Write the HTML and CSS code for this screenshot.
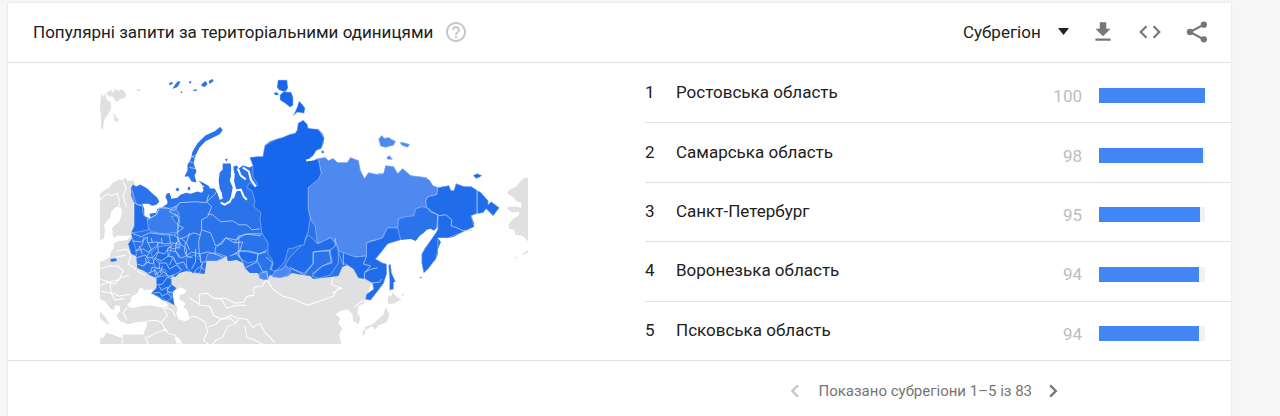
FILE: index.html
```html
<!DOCTYPE html>
<html lang="uk">
<head>
    <meta charset="UTF-8">
    <title>Популярні запити за територіальними одиницями</title>
    <link rel="stylesheet" href="styles.css">
</head>
<body>
<section class="widget">
    <header class="widget-header">
        <h2 class="widget-title">Популярні запити за територіальними одиницями</h2>
        <button class="icon-button help-button" type="button" aria-label="Довідка">
            <svg width="24" height="24" viewBox="0 0 24 24"><path d="M11 18h2v-2h-2v2zm1-16C6.480 2 2 6.480 2 12s4.480 10 10 10 10-4.480 10-10S17.520 2 12 2zm0 18c-4.410 0-8-3.590-8-8s3.590-8 8-8 8 3.590 8 8-3.590 8-8 8zm0-14c-2.210 0-4 1.790-4 4h2c0-1.100.9-2 2-2s2 .9 2 2c0 2-3 1.750-3 5h2c0-2.250 3-2.500 3-5 0-2.210-1.790-4-4-4z"/></svg>
        </button>
        <div class="widget-actions">
            <label class="resolution">
                <select class="resolution-select" aria-label="Рівень регіону">
                    <option>Субрегіон</option>
                </select>
                <svg class="resolution-arrow" width="11" height="7" viewBox="0 0 11 7"><path d="M0 0h11L5.500 7z"/></svg>
            </label>
            <button class="icon-button" type="button" aria-label="Завантажити">
                <svg width="26" height="26" viewBox="0 0 24 24"><path d="M19 9h-4V3H9v6H5l7 7 7-7zM5 18v2h14v-2H5z"/></svg>
            </button>
            <button class="icon-button" type="button" aria-label="Вставити">
                <svg width="26" height="26" viewBox="0 0 24 24"><path d="M9.400 16.600L4.800 12l4.600-4.600L8 6l-6 6 6 6 1.400-1.400zm5.200 0l4.600-4.600-4.600-4.600L16 6l6 6-6 6-1.400-1.400z"/></svg>
            </button>
            <button class="icon-button" type="button" aria-label="Поділитися">
                <svg width="26" height="26" viewBox="0 0 24 24"><path d="M5.500 12L18.300 5.200M5.500 12l12.800 6.800" fill="none" stroke="#757575" stroke-width="1.900"/><circle cx="18.300" cy="5.200" r="2.900"/><circle cx="5.500" cy="12" r="2.900"/><circle cx="18.300" cy="18.800" r="2.900"/></svg>
            </button>
        </div>
    </header>

    <div class="widget-body">
        <div class="map-panel">
            <svg class="map" viewBox="101 79 426 264" role="img" aria-label="Карта субрегіонів">
                <!-- neighbouring countries -->
                <g class="land">
                    <path d="M101 193L105 190L110 187L114 182L120 179L123 180L126 177L128 180L134 180L136 183L133 187L136 240L160 262L180 268L200 266L210 256L230 255L246 262L262 268L290 268L330 274L342 264L354 264L360 275L372 279L367 293L364 302L358 305L357 312L360 317L358 323L353 320L352 313L347 308L340 310L335 313L340 317L338 322L342 327L339 333L341 343H101z"/>
                    <path d="M102 94l3 3 1-4 2 7 4 2 0 7-3 5-4 6-1 9-2-1 0-12-1-8zM107 93l5-3 2 3 2-4 3 2 4-2 4 5-1 4-5 1-4 3-3-5-5-1zM113 112l3 3 2 3 2 1-2 3-3-2 0-4z"/>
                    <path d="M388 295l3 0 1-4 4 5 5 2-7 4-6 1-1-4zM385 306l4 7-3 8-8 3-3 4-4-3-6 4-1-3 8-3 7-6 4-4zM362 329l3 0-1 5-2 0z"/>
                    <path d="M527 177l-5 1-4 4-3 4-8 4-1 3 7 4 1 3 6 2 0 5-4-1-9 0-1 2 5 4 7-1-1 4-5 3-5 6 1 4 5 1 1 5 7 1 6 6z"/>
                    <path d="M522 252l5-3 0 2-5 3zM513 257l4-2-3 3zM400 294l4-2-2 3zM138 89h3v2h-3z"/>
                </g>
                <g class="water">
                    <path d="M117 206l5 1 1 5-3 9-7 6 1 10 4-2 5 0 9 0-4 4-8 1-5 2 0 5-3 3-1 6-7 4-4 1 0-8 1-13 4-3 1-8-1-5 6-7 1-6z"/>
                    <path d="M128 303l3-2 2-6 5-3 3-6 5 3 8-1-2 5 7 3 7 4 3 5-9 1-9-2-10 1-7 2-4-1z"/>
                    <path d="M173 293l3-4 5-3 6 3-1 3-6 2 0 4 6 4-2 4 4 3 2 9-4 2-7-2-2-6 1-5-4-7-2-4z"/>
                    <path d="M101 298l5 2 5 7 4 2 1-5 5 1 0 5-4 4 4 6 8 3 8-2 10-1 1 4-4 9-7 0-12 0-4 3-8-3-6-2-2 5-4 1v-20l5 4 5 3-4-7-6-7zM175 335l4 1 4 6h-6z"/>
                </g>
                <path class="land-border" d="M101 199l7-6 4 2 6-2 2 6 0 7M124 181l3 7-3 7 3 11M112 260l5-4 10-2M101 268l8-3 10 0 5 5-4 8-9 3-10-3M118 250l9-2 5 6-3 9 8 5M101 285l7-4 8 2 5-6 9-3M111 281l1 10 8 4 11-2M102 290l10 2 4 7 9-2M138 270l8 4M128 306l-4 6 4 6M163 305l5 9-6 7 4 7-8 3-10 5M147 320l9-1 6 2M164 325l5 7 8 2M165 306l8 3 3 6M188 317l7-2 10 5 3 10-4 9 5 4M208 326l8-3 6-6 8 1M190 297l10 6 0-10 8-1 6 5 8 1 5 9 10-3 9 0M200 304l10 1 4 9 8 4 7-3 7 7 3-5 8 1 6 8 7-4 5 9 10 10M236 322l-8 3-5 11-7 3-3 4M245 324l2 12 9 3 9 5M223 318l8-4 7 3M214 297l12 0 9 5 9-1 3-6 7-1 0-8 8-1 4-6M267 279l6 9 10 7 11 3 13 6 12-4 14-5 4-7 4-1-10-4 2-7M354 306l7-6 6-1M123 333v10M146 335l3 8M340 287l-8 5M101 328l8 3"/>

                <!-- all the subregions under one outline -->
                <path class="region" d="M132 187L134 184L137 186L141 184L148 188L151 191L158 197L160 201L157 204L153 205L149 203L143 203L145 208L145 215L149 217L152 218L150 213L157 212L158 208L162 207L168 203L168 200L166 196L167 194L170 194L172 198L178 197L181 194L187 192L191 193L198 191L202 192L204 190L203 187L206 185L211 188L215 188L218 193L220 199L223 198L222 192L220 188L219 180L220 172L223 169L223 163L231 163L232 173L230 180L233 187L231 197L234 198L237 190L234 184L235 174L233 166L237 165L239 168L243 165L250 167L253 165L250 157L258 156L263 156L264 150L265 145L270 141L276 139L283 137L290 134L295 133L297 130L298 123L303 120L307 124L308 128L314 129L318 129L322 133L324 138L323 144L321 148L316 150L313 155L307 160L313 160L318 158L325 157L328 160L333 158L337 162L347 162L350 157L358 160L360 170L364 178L368 172L373 174L378 174L377 173L383 173L385 165L389 167L393 166L397 173L402 168L406 172L410 175L418 176L425 177L429 180L432 185L437 187L448 185L450 190L453 190L455 183L463 186L470 186L475 189L480 192L483 197L487 200L487 204L490 201L498 207L495 211L492 215L485 208L482 212L475 213L470 215L473 222L473 226L466 229L460 232L453 236L447 237L442 236L437 237L440 241L437 248L437 253L435 258L431 261L428 267L423 272L421 262L421 253L424 247L428 242L431 238L435 232L440 227L438 225L433 230L430 228L426 229L423 232L419 235L415 240L410 238L400 239L393 240L387 243L383 248L380 252L375 258L382 262L386 263L386 273L383 282L377 290L370 299L365 298L366 293L373 288L372 282L365 278L358 277L353 268L347 264L342 266L338 275L330 276L322 277L313 278L310 275L302 274L292 272L288 275L280 277L270 274L267 279L260 277L258 272L250 272L245 267L243 262L237 259L230 260L228 260L227 255L222 258L217 260L207 260L205 273L197 272L187 270L180 272L176 276L172 275L172 283L177 287L173 291L175 304L168 300L163 299L158 295L152 292L157 287L158 282L157 277L150 274L145 270L138 267L137 255L132 253L129 243L133 237L132 232L135 225L135 212L135 203L132 195z"/>
                <path class="region low" d="M318 158L325 157L328 160L333 158L337 162L347 162L350 157L358 160L360 170L364 178L368 172L378 174L383 173L385 165L393 166L397 173L402 168L410 175L425 177L429 180L432 185L437 187L436 194L427 196L425 200L427 207L421 206L415 208L413 215L405 216L398 218L397 227L387 227L382 237L376 239L370 240L366 242L366 255L355 256L345 254L338 250L336 242L330 236L324 241L317 242L315 225L311 220L308 208L308 187L312 182L321 173z"/>
                <path class="region high" d="M437 187L448 185L450 190L453 190L455 183L463 186L470 186L480 192L487 200L487 204L490 201L498 207L492 215L485 208L482 212L475 213L470 215L473 226L460 232L447 237L437 237L437 248L435 258L428 267L423 272L421 262L421 253L428 242L435 232L437 228L437 214L429 211L426 207L425 200L427 196L436 194z"/>
                <path class="region high" d="M366 242L376 239L382 237L387 227L397 227L400 239L387 243L380 252L375 258L382 262L386 263L386 273L383 282L377 290L370 299L365 298L366 293L373 288L372 282L365 278L358 277L353 268L347 264L342 262L338 250L355 256L366 255z"/>
                <path class="region high" d="M133 190L137 203L143 205L144 214L151 221L149 229L140 231L132 232L135 225L135 203zM129 243L133 237L137 249L137 255L132 253zM157 276L172 274L172 283L168 289L173 295L168 300L152 292L157 287z"/>
                <path class="region low" d="M272 276L275 270L282 268L286 264L290 266L290 273L280 277zM260 272L266 271L269 278L264 279L259 277z"/>
                <path class="region mid" d="M148 219L157 214L160 207L168 208L176 206L180 214L172 216L178 224L179 231L165 233L152 231L149 227zM208 253L217 252L226 255L217 260L206 260z"/>
                <path class="region high" d="M152 252l6-6 14-2-2 10 7 8 5 7-7 5-7 1-2-6-10-3zM238 250l10 1 10 2-1 7-9 2-8-5zM187 257l9-3 7 8-3 10-7 0-6-5zM290 256L303 243L308 234L313 238L317 243L330 237L336 243L338 250L338 262L330 274L318 277L312 275L322 265L332 262L330 250L313 251L313 262L304 272L290 268L285 264z"/>
                <path class="region top" d="M250 157L258 156L263 156L264 150L265 145L276 139L283 137L290 134L295 133L297 130L298 123L303 120L307 124L308 128L318 129L324 138L321 148L316 150L313 155L307 160L313 160L318 158L321 173L318 179L308 187L308 208L310 217L308 231L305 238L304 244L298 245L294 247L288 248L285 260L280 266L275 270L270 268L273 260L268 253L268 242L262 232L260 218L261 212L254 206L255 200L252 190L247 187L250 182L255 186L258 184L253 176L253 165z"/>

                <!-- islands -->
                <path class="region" d="M221 127l2 3-3 4-6 3-8 4-6 6-4 8-2 8 3 8-2 4 2 7-5-1-3-5-4 0 3-6 0-6 3-5 2-8 5-8 8-8 9-4 5-4zM172 197l-4-1-1-3 3-1zM176 189l2-2 2 2-2 2zM188 189l1-3 2 1-1 3zM225 159l3-1-1 3zM199 180l6 3 5 3-1 2-6-3z"/>
                <path class="region" d="M202 84l4-3 2 3-3 3-3-1zM209 81l4-2 1 2-4 3zM176 84l3-3 2 1-3 5-5 2zM169 84l3-2 2 1-3 2zM194 90l3-1 0 2-3 0zM181 93l1-2 1 2zM189 82l3-1-1 3z"/>
                <path class="region top" d="M278 80l9 0 1 8-3 4-6-2-2-3zM274 93l3-1 2 3-4 0zM280 95l4-4 3 1 4 0 2 5 0 8-3 2-5-4-5-3zM299 101l3 3 3 4-1 5-7-1-4 4 4-9zM321 151l2-1 1 2-2 1z"/>
                <path class="region low" d="M378 139l3-4 3 3 4-1 3 2 4 2-2 4-8 2-5-1zM399 142l3 0 7 2-2 3-6-2zM386 157l3-2 3 4-5 0z"/>
                <path class="region high" d="M472 175l4-2 5 2-3 2-3 1zM388 264l2-1 1 9 4 9-2 0 0 7-4 1 0-9zM111 258l6-1 1 3-6 1zM419 276h2v1h-2z"/>

                <!-- bays and gulfs -->
                <path class="gulf" d="M233 165l-1 8 1 7 2 7-2 8-3 6-5 3-4-2M235 190l6-1 3 7 3 3M238 168l3 7 5 4M243 167l6 4 2 8 5 7M306 160l6-1"/>
                <path class="coast-gap" d="M191 154l4 4M190 158l5-3M189 161l4 1M190 167l6 1M476 188v25"/>

                <!-- subregion borders -->
                <path class="border" d="M143 205l-5-1-4-3M148 219l9-5 3-7 7 0 8 3 5-8 16-1 10 1 9-8 3-5M178 204l-8 7 10 5-2 8 6 3-9 7M209 194l-2 7 5 5-4 10-6 3 0 10-3 12 1 15M208 213l5 1 8 7 12-1 6 4 8 0 5 5 8-1M202 229l9 3 5 13 6-2 4-6 10 2 10-6 15 2M217 246l9-9 9 5 8-1-4 12 2 5M235 242l4-7 11-2 12 0M238 250l11 0 11 3 7-4M239 236l0 14-6 4M236 252l6 7 3 8 12-6 1-8 8-2M258 261l5 10 4-1 1 8M266 256l7 6-2 7M216 246l-1 7 8 3M230 255l8-3M290 266l14 8 9-11 0-12 8-1 9-1M331 261l-2-11 6-5 0-8M331 261l-9 4-10 8M343 264l0-12M366 255l-3 8 7 2-6 7 0 6M364 271l7-3 6-1M371 282l8-1 2-3M437 215l8-1 6 5-1 6 6 2 6 3 9-1M427 207l4 4 6 3-1 14"/>
                <path class="border" d="M132 232l10 4 8-4 16 2 8 0 6 4 6-2 8-4 7 2M176 213l4 7-2 10 1 10-4 6M133 240l9 1 6-5 0 6 10-1 7 2 9-1 6 2M145 236l-2 8-6 6M136 250l8-2 5 3 7-5 5-5M149 242l3 7-5 7 6 1 5-6 7 2 5-7 4 2 7-3-3-7M158 241l1 10-3 6 6 3 7-5-1-7 6-5M137 257l9-3 4 6-6 5-6-2M144 265l3-4 7 2 1-6 5 5 0 6-7-2-2 6-5 0M155 268l1 6 6-5 5 4 3 3 5-3M160 262l7 0 3 6 7-4 5 5M168 255l6 1 3 7 7-2 4 6M169 249l8 2 5 6 5-2 0-7-6-5-3-7M181 237l5 4-1 9 2 5 6 2M187 255l5-4 8 2 8-2 8 2M190 232l-3 10 3 7M196 248l0 13-4 7M201 254l0 7 6 0M200 266l-4 3-1 3M203 262l-2 4 4 3M177 241l-1 9 4 7M163 243l-1-6M170 234l1 8M156 276l3 0 5-5M150 272l6-3 3 6M157 284l6-1 5-7 5 2M160 285l2 4 6-3 0 5 5 0M154 292l6-1 3 4 5-3 5 5M140 245l3 8M171 284l-3 4M147 261l-1-4M163 265l-2 7M173 258l-3 6M181 247l-4 0M152 237l1 5"/>
            </svg>
        </div>

        <div class="ranking">
            <ol class="ranking-list">
                <li class="ranking-row">
                    <span class="rank">1</span>
                    <a class="region-name" href="#">Ростовська область</a>
                    <span class="score">100</span>
                    <div class="bar"><div class="bar-value" style="width: 100%"></div></div>
                </li>
                <li class="ranking-row">
                    <span class="rank">2</span>
                    <a class="region-name" href="#">Самарська область</a>
                    <span class="score">98</span>
                    <div class="bar"><div class="bar-value" style="width: 98%"></div></div>
                </li>
                <li class="ranking-row">
                    <span class="rank">3</span>
                    <a class="region-name" href="#">Санкт-Петербург</a>
                    <span class="score">95</span>
                    <div class="bar"><div class="bar-value" style="width: 95%"></div></div>
                </li>
                <li class="ranking-row">
                    <span class="rank">4</span>
                    <a class="region-name" href="#">Воронезька область</a>
                    <span class="score">94</span>
                    <div class="bar"><div class="bar-value" style="width: 94%"></div></div>
                </li>
                <li class="ranking-row">
                    <span class="rank">5</span>
                    <a class="region-name" href="#">Псковська область</a>
                    <span class="score">94</span>
                    <div class="bar"><div class="bar-value" style="width: 94%"></div></div>
                </li>
            </ol>
        </div>
    </div>

    <footer class="widget-footer">
        <nav class="pagination">
            <button class="icon-button page-button" type="button" aria-label="Назад" disabled>
                <svg width="22" height="22" viewBox="0 0 24 24"><path d="M15 6.700L13.300 5 6.300 12l7 7 1.700-1.700L9.700 12z"/></svg>
            </button>
            <span>Показано субрегіони 1–5 із 83</span>
            <button class="icon-button page-button" type="button" aria-label="Далі">
                <svg width="22" height="22" viewBox="0 0 24 24"><path d="M8.700 5L7 6.700 12.300 12 7 17.300 8.700 19l7-7z"/></svg>
            </button>
        </nav>
    </footer>
</section>
</body>
</html>
```
FILE: styles.css
```css
* {
    box-sizing: border-box;
}
body {
    margin: 0;
    padding: 3px 49px 0 8px;
    background-color: #f6f6f6;
    color: #212121;
    font-family: Roboto, Arial, sans-serif;
    font-size: 17px;
    line-height: 24px;
}
.widget {
    background-color: #fff;
    box-shadow: 0 0 2px rgba(0, 0, 0, 0.12);
}
.widget-header {
    display: flex;
    align-items: center;
    min-height: 60px;
    padding: 0 21px 2px 25px;
    border-bottom: 1px solid #e0e0e0;
}
.widget-title {
    margin: 0;
    font-size: 17px;
    font-weight: 400;
}
.icon-button {
    display: flex;
    padding: 0;
    border: 0;
    background: none;
    fill: #757575;
    cursor: pointer;
}
.help-button {
    margin-left: 11px;
    fill: #c6c6c6;
}
.widget-actions {
    display: flex;
    align-items: center;
    gap: 21px;
    margin-left: auto;
}
.resolution {
    display: flex;
    align-items: center;
    gap: 17px;
}
.resolution-select {
    appearance: none;
    padding: 0;
    border: 0;
    background: none;
    color: #212121;
    font: inherit;
}
.resolution-arrow {
    fill: #212121;
}

/* body: map and ranking */
.widget-body {
    display: grid;
    grid-template-columns: 637fr 586fr;
    border-bottom: 1px solid #e0e0e0;
}
.map-panel {
    display: flex;
    align-items: flex-start;
    justify-content: center;
    padding: 16px 25px 16px 0;
}
.map {
    width: 70%;
}
.land {
    fill: #e0e0e0;
}
.water {
    fill: #fff;
}
.land-border {
    fill: none;
    stroke: #fff;
    stroke-width: 1;
}
.region {
    fill: #2b73ea;
}
.region.top, .region.high, .region.mid, .region.low {
    stroke: #b5d3ff;
    stroke-width: 0.5;
}
.region.top {
    fill: #1766ec;
}
.region.high {
    fill: #216ceb;
}
.region.mid {
    fill: #3a7dee;
}
.region.low {
    fill: #4f89f0;
}
.border {
    fill: none;
    stroke: #b5d3ff;
    stroke-width: 0.8;
    stroke-linejoin: round;
}
.gulf, .coast-gap {
    fill: none;
    stroke: #fff;
    stroke-width: 2;
}
.coast-gap {
    stroke-width: 0.6;
}

.ranking-list {
    display: grid;
    grid-auto-rows: 1fr;
    min-height: 297px;
    margin: 0;
    padding: 0;
    list-style: none;
}
.ranking-row {
    display: flex;
    align-items: center;
    padding: 0 26px 2px 0;
}
.ranking-row + .ranking-row {
    border-top: 1px solid #e0e0e0;
}
.rank {
    width: 31px;
}
.region-name {
    flex: 1;
    color: inherit;
    text-decoration: none;
}
.score {
    padding-top: 8px;
    color: #bdbdbd;
}
.bar {
    width: 106px;
    margin: 8px 0 0 17px;
    background-color: #f1f1f1;
}
.bar-value {
    height: 15px;
    background-color: #4285f4;
}

.widget-footer {
    display: flex;
    justify-content: flex-end;
    padding: 19px 166px 20px 0;
    color: #757575;
    font-size: 15px;
    line-height: 22px;
}
.pagination {
    display: flex;
    align-items: center;
    gap: 11px;
}
.page-button:disabled {
    fill: #c6c6c6;
    cursor: default;
}
```
